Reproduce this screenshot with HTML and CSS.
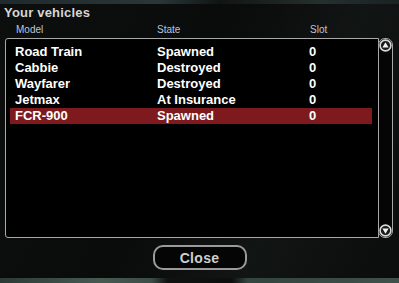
FILE: index.html
```html
<!DOCTYPE html>
<html lang="en">
  <head>
    <meta charset="UTF-8" />
    <title>Your vehicles</title>
    <link rel="stylesheet" href="styles.css">
  </head>
  <body>
    <div class="scene-top"></div>
    <div class="panel">
      <h1 class="title">Your vehicles</h1>

      <div class="columns">
        <span>Model</span>
        <span>State</span>
        <span>Slot</span>
      </div>

      <div class="list-wrap">
        <div class="list">
          <div class="row"><span>Road Train</span><span>Spawned</span><span>0</span></div>
          <div class="row"><span>Cabbie</span><span>Destroyed</span><span>0</span></div>
          <div class="row"><span>Wayfarer</span><span>Destroyed</span><span>0</span></div>
          <div class="row"><span>Jetmax</span><span>At Insurance</span><span>0</span></div>
          <div class="row selected"><span>FCR-900</span><span>Spawned</span><span>0</span></div>
        </div>
        <div class="scrollbar">
          <svg class="arrow" width="13" height="13" viewBox="0 0 13 13">
            <circle cx="6.5" cy="6.5" r="5.4" fill="#1a1a1a" stroke="#d8d8d8" stroke-width="1.6" />
            <path d="M6.5 3.2 L9.6 8.4 L3.4 8.4 Z" fill="#f2f2f2" />
          </svg>
          <svg class="arrow" width="13" height="13" viewBox="0 0 13 13">
            <circle cx="6.5" cy="6.5" r="5.4" fill="#1a1a1a" stroke="#d8d8d8" stroke-width="1.6" />
            <path d="M6.5 9.8 L9.6 4.6 L3.4 4.6 Z" fill="#f2f2f2" />
          </svg>
        </div>
      </div>

      <div class="actions">
        <button type="button" class="close-btn">Close</button>
      </div>
    </div>
    <div class="scene-bottom"></div>
  </body>
</html>
```

FILE: styles.css
```css
html,
body {
  margin: 0;
  padding: 0;
}
body {
  width: 399px;
  height: 283px;
  overflow: hidden;
  font-family: "Liberation Sans", Arial, sans-serif;
  background: linear-gradient(115deg, #0d0f0f 0%, #0a0b0b 45%, #111514 70%, #0b0c0c 100%);
  display: flex;
  flex-direction: column;
}
.scene-top {
  height: 4px;
  background: linear-gradient(90deg, #1f2a2c 0%, #2a3638 40%, #111414 55%, #25302f 80%, #1a2222 100%);
}
.panel {
  flex: 1;
}
.title {
  margin: 0;
  padding: 1px 0 0 4px;
  font-size: 13px;
  line-height: 16px;
  font-weight: bold;
  color: #d6d6d6;
  letter-spacing: 0.2px;
}
.columns {
  display: grid;
  grid-template-columns: 141px 153px 1fr;
  padding: 3px 0 0 16px;
  font-size: 10px;
  line-height: 12px;
  color: #bcc4dc;
}
.list-wrap {
  display: flex;
  margin: 2px 0 0 5px;
  width: 388px;
  height: 200px;
}
.list {
  flex: 1;
  background: #000;
  border: 1px solid #a8a8a8;
  border-radius: 3px 0 0 3px;
  padding: 5px 6px 0 4px;
}
.row {
  display: grid;
  grid-template-columns: 142px 152px 1fr;
  padding-left: 5px;
  height: 16px;
  line-height: 16px;
  font-size: 13px;
  font-weight: bold;
  color: #fff;
  white-space: nowrap;
}
.row.selected {
  background: #7e1a1e;
}
.scrollbar {
  width: 13px;
  margin-left: -1px;
  background: #050505;
  border: 1px solid #a8a8a8;
  border-radius: 7px;
  display: flex;
  flex-direction: column;
  justify-content: space-between;
}
.arrow {
  display: block;
}
.actions {
  display: flex;
  justify-content: center;
  padding-top: 7px;
}
.close-btn {
  width: 94px;
  height: 25px;
  padding: 0;
  background: #050505;
  border: 2px solid #9a9a9a;
  border-radius: 10px;
  font-family: "Liberation Sans", Arial, sans-serif;
  font-size: 14px;
  font-weight: bold;
  color: #cfcfcf;
  letter-spacing: 0.3px;
}
.scene-bottom {
  height: 5px;
  background: linear-gradient(90deg, #2c3a36 0%, #465a52 25%, #3c4d47 38%, #101212 42%, #0c0d0d 58%, #34443f 62%, #3f514a 100%);
}
```
